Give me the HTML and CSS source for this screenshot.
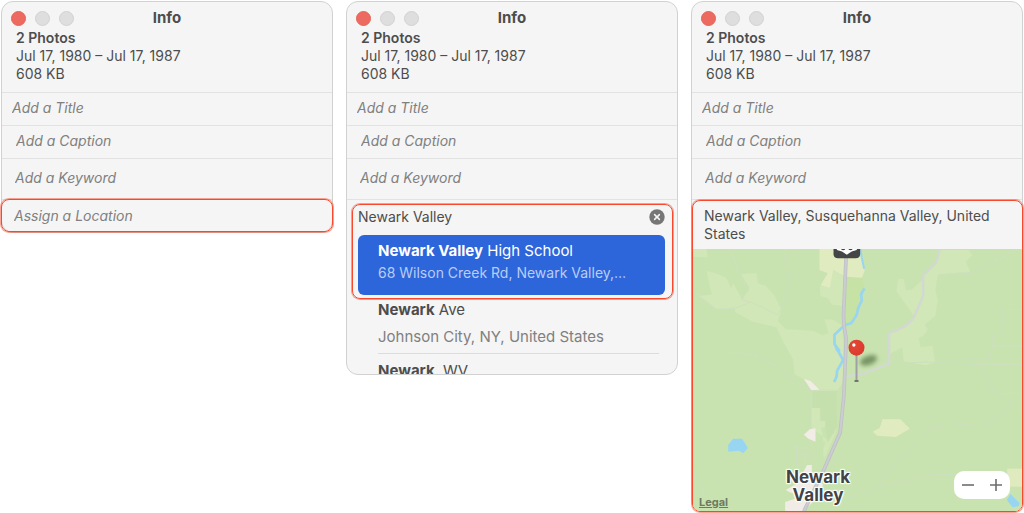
FILE: index.html
```
<!DOCTYPE html>
<html lang="en">
<head>
    <meta charset="UTF-8">
    <meta name="viewport" content="width=device-width, initial-scale=1.0">
    <title>Info</title>
    <link rel="stylesheet" href="styles.css">
</head>
<body>
    <main class="steps">
        <section class="panel">
            <header class="titlebar">
                <div class="lights">
                    <button class="light close" aria-label="Close"></button>
                    <button class="light" aria-label="Minimize" disabled></button>
                    <button class="light" aria-label="Zoom" disabled></button>
                </div>
                <h2>Info</h2>
            </header>
            <div class="meta">
                <strong>2 Photos</strong>
                <span>Jul 17, 1980 – Jul 17, 1987</span>
                <span>608 KB</span>
            </div>
            <input class="field title" type="text" placeholder="Add a Title" aria-label="Title">
            <input class="field caption" type="text" placeholder="Add a Caption" aria-label="Caption">
            <input class="field keyword" type="text" placeholder="Add a Keyword" aria-label="Keyword">
            <div class="highlight assign">
                <input class="field location" type="text" placeholder="Assign a Location" aria-label="Location">
            </div>
        </section>

        <section class="panel">
            <header class="titlebar">
                <div class="lights">
                    <button class="light close" aria-label="Close"></button>
                    <button class="light" aria-label="Minimize" disabled></button>
                    <button class="light" aria-label="Zoom" disabled></button>
                </div>
                <h2>Info</h2>
            </header>
            <div class="meta">
                <strong>2 Photos</strong>
                <span>Jul 17, 1980 – Jul 17, 1987</span>
                <span>608 KB</span>
            </div>
            <input class="field title" type="text" placeholder="Add a Title" aria-label="Title">
            <input class="field caption" type="text" placeholder="Add a Caption" aria-label="Caption">
            <input class="field keyword" type="text" placeholder="Add a Keyword" aria-label="Keyword">
            <div class="highlight search">
                <div class="search-row">
                    <input class="search-input" type="text" value="Newark Valley" aria-label="Location">
                    <button class="clear" aria-label="Clear">
                        <svg viewBox="0 0 16 16" width="16" height="16">
                            <circle cx="8" cy="8" r="7.7" fill="#767676"/>
                            <path d="M5.6 5.6l4.8 4.8M10.4 5.6l-4.8 4.8" stroke="#f5f5f5" stroke-width="1.5" stroke-linecap="round"/>
                        </svg>
                    </button>
                </div>
                <button class="result selected">
                    <span class="name"><b>Newark Valley</b> High School</span>
                    <span class="address">68 Wilson Creek Rd, Newark Valley,…</span>
                </button>
            </div>
            <div class="results">
                <button class="result">
                    <span class="name"><b>Newark</b> Ave</span>
                    <span class="address">Johnson City, NY, United States</span>
                </button>
                <button class="result">
                    <span class="name"><b>Newark</b>&nbsp; WV</span>
                </button>
            </div>
        </section>

        <section class="panel">
            <header class="titlebar">
                <div class="lights">
                    <button class="light close" aria-label="Close"></button>
                    <button class="light" aria-label="Minimize" disabled></button>
                    <button class="light" aria-label="Zoom" disabled></button>
                </div>
                <h2>Info</h2>
            </header>
            <div class="meta">
                <strong>2 Photos</strong>
                <span>Jul 17, 1980 – Jul 17, 1987</span>
                <span>608 KB</span>
            </div>
            <input class="field title" type="text" placeholder="Add a Title" aria-label="Title">
            <input class="field caption" type="text" placeholder="Add a Caption" aria-label="Caption">
            <input class="field keyword" type="text" placeholder="Add a Keyword" aria-label="Keyword">
            <div class="highlight place">
                <textarea class="place-name" rows="2" aria-label="Location">Newark Valley, Susquehanna Valley, United States</textarea>
                <div class="map">
                    <svg class="map-art" viewBox="6 9 990 786" preserveAspectRatio="xMidYMid slice">
                        <defs>
                            <radialGradient id="ball" cx="0.4" cy="0.35" r="0.7">
                                <stop offset="0" stop-color="#e54636"/>
                                <stop offset="1" stop-color="#da3a2b"/>
                            </radialGradient>
                            <filter id="soft" x="-50%" y="-50%" width="200%" height="200%">
                                <feGaussianBlur stdDeviation="7"/>
                            </filter>
                        </defs>
                        <rect x="6" y="9" width="990" height="786" fill="#c9e3b0"/>
                        <!-- fields -->
                        <g fill="#d1e7b7">
                            <path d="M6 9H48L51 34L6 32z"/>
                            <path d="M48 74L80 84L108 96L122 128L128 112L154 160L176 132L174 120L152 84L198 82L202 112L226 120L250 146L272 190L262 226L286 250L368 254L396 268L414 262L402 220L430 222L456 240L462 400L440 436L436 560L400 640L398 610L408 580L362 545L362 486H388V524H404V544H392L400 590L432 560L438 440L362 432L340 400L312 384L308 340L280 290L258 244L184 226L134 198V188L78 188L24 150L64 146z"/>
                            <path d="M388 120L416 124L422 76H460V180L424 176L412 156L390 150z"/>
                            <path d="M746 12H834L846 26L826 48L840 78L742 87L734 130L742 164L734 210L702 236L712 250L698 270L684 276L690 304L726 300L734 350L706 358L640 346L636 304L597 324V262L650 238L672 212L618 136L624 98L640 100L646 132H662L698 100V90L738 50z"/>
                        </g>
                        <path d="M366 436L440 434V540L412 590L404 545V524H390V486H366z" fill="#c6e0ad"/>
                        <path d="M466 92L516 96L521 128L496 216L462 236L457 210z" fill="#c6e2a4"/>
                        <path d="M387 9H510L521 60L522 76L514 95L468 92L428 72L418 125L390 118L412 82L387 72z" fill="#e1ebc0"/>
                        <path d="M576 520H630L658 548L616 573L560 569L547 557L568 545z" fill="#e1ebc0"/>
                        <path d="M950 668H996V722H950z" fill="#e0eabf"/>
                        <!-- minor roads -->
                        <g fill="none" stroke="#cddfc0" stroke-width="3">
                            <path d="M116 9L172 132L154 162L182 168L260 206L274 186L296 100L284 9M6 134L78 190L136 186L182 168"/>
                            <path d="M114 322L182 324L262 362L312 408L362 432V660M362 432H440M318 590V660M318 606H344M318 626H362M344 626V660M318 658H362"/>
                            <path d="M744 86L848 78L908 50L978 11M996 190H936L934 258L908 266L904 300L898 336L862 342L816 334L786 352L862 356H996M597 354L706 348L786 352M904 300H996M862 342L896 416L922 444L996 442"/>
                            <path d="M964 446L956 486L896 530L726 542L656 616L628 632L604 672L578 694L564 726L526 746L470 752M564 724L650 708L716 686H800M456 618L416 662M6 676L36 734L46 752"/>
                        </g>
                        <!-- built up area -->
                        <g fill="#f1ede6">
                            <path d="M340 398L360 405L387 431L362 432z"/>
                            <path d="M340 566L358 550L375 547V587L354 578z"/>
                            <path d="M350 657H364V690L398 716L384 750L340 796H284V768L314 758L324 740L300 740L286 732L320 712z"/>
                        </g>
                        <!-- water -->
                        <g fill="none" stroke="#98d5f1" stroke-linejoin="round">
                            <path d="M510 9L514 36L521 68" stroke-width="6"/>
                            <path d="M522 127L512 144L514 164L504 184L498 208L482 232L462 238L432 266V294L442 314L458 342L440 374L438 392L431 408" stroke-width="8"/>
                        </g>
                        <path d="M432 288L450 312L448 322L436 314z" fill="#98d5f1"/>
                        <path d="M113 617V597L128 578H154L164 592L172 606L158 622L146 614z" fill="#98d5f1"/>
                        <path d="M960 744L949 762L966 784L985 780L987 771z" fill="#98d5f1"/>
                        <!-- roads -->
                        <g fill="none" stroke-linejoin="round">
                            <path d="M748 9L738 49L698 88V150L668 218L643 242L596 262V353L520 382L460 392" stroke="#d3d8d2" stroke-width="7"/>
                            <path d="M467 29L459 209L461 240L467 280L460 450L449 560L396 680L340 796" stroke="#bec1c3" stroke-width="11"/>
                            <path d="M467 29L459 209L461 240L467 280L460 450L449 560L396 680L340 796" stroke="#cccdd3" stroke-width="6"/>
                        </g>
                        <!-- route shield -->
                        <path d="M429-20H509V23Q509 37 495 37H443Q429 37 429 23z" fill="#444546"/>
                        <path d="M439-10H499V12Q483 14 469 26Q455 14 439 12z" fill="#fff"/>
                        <path d="M453 9q5 4 10 0M475 9q5 4 10 0" fill="none" stroke="#444546" stroke-width="4"/>
                        <!-- pin -->
                        <ellipse cx="534" cy="343" rx="27" ry="14" transform="rotate(-20 534 343)" fill="#5e7a4c" opacity="0.75" filter="url(#soft)"/>
                        <path d="M498 324V404" stroke="#a0a0a4" stroke-width="6"/>
                        <path d="M492 405H504" stroke="#5f6360" stroke-width="5"/>
                        <circle cx="498" cy="305" r="24" fill="url(#ball)"/>
                        <circle cx="490" cy="297" r="5" fill="#fff"/>
                    </svg>
                    <span class="town">Newark<br>Valley</span>
                    <a class="legal" href="#">Legal</a>
                    <div class="zoom">
                        <button aria-label="Zoom out"><svg viewBox="0 0 14 14" width="14" height="14"><path d="M1 7h12" stroke="#6e6e6e" stroke-width="1.6"/></svg></button>
                        <button aria-label="Zoom in"><svg viewBox="0 0 14 14" width="14" height="14"><path d="M1 7h12M7 1v12" stroke="#6e6e6e" stroke-width="1.6"/></svg></button>
                    </div>
                </div>
            </div>
        </section>
    </main>
</body>
</html>
```
FILE: styles.css
```
* {
    box-sizing: border-box;
}

body {
    margin: 0;
    background: #fff;
    font-family: Inter, "Liberation Sans", sans-serif;
    font-size: 14px;
    line-height: 18px;
    color: #4d4d4d;
}

button, input, textarea {
    font: inherit;
    color: inherit;
    margin: 0;
    padding: 0;
    border: none;
    border-radius: 0;
    background: none;
    outline: none;
}

.steps {
    display: grid;
    grid-template-columns: repeat(3, minmax(0, 1fr));
    align-items: start;
    gap: 13px;
    padding: 1px;
}

.panel {
    display: flex;
    flex-direction: column;
    background: #f5f5f5;
    border: 1px solid #d0d2d1;
    border-radius: 12px;
}

/* window header */
.titlebar {
    display: grid;
    grid-template-columns: 1fr auto 1fr;
    align-items: center;
    height: 27px;
    padding: 5px 9px 0;
}

.titlebar h2 {
    margin: 0;
    font-size: 15px;
    font-weight: 700;
}

.lights {
    display: flex;
    gap: 9px;
}

.light {
    width: 15px;
    height: 15px;
    border: 1px solid #d2d2d2;
    border-radius: 50%;
    background: #dedede;
}

.light.close {
    border-color: #e5645a;
    background: #ec6a5f;
}

.meta {
    display: flex;
    flex-direction: column;
    padding: 0 14px 9px;
    border-bottom: 1px solid #e2e2e2;
}

.meta strong {
    font-weight: 600;
}

/* editable rows */
.field {
    width: 100%;
    height: 33px;
    padding: 0 13px 3px;
    border-bottom: 1px solid #e2e2e2;
}

.field::placeholder {
    color: #808080;
    font-style: italic;
    opacity: 1;
}

.field.title {
    padding-left: 10px;
}

.field.caption {
    padding-left: 14px;
}

.field.keyword {
    height: 41px;
}

.field.location {
    height: 31px;
    padding: 0 12px;
    border-bottom: none;
}

.highlight {
    border: 1px solid #f9482b;
    border-radius: 8px;
    box-shadow: 0 0 0 1px rgba(249, 72, 43, 0.5);
}

.assign {
    margin: -1px -1px 0;
}

/* location search */
.search {
    margin: 4px 4px 0 5px;
    padding: 0 7px 3px 5px;
}

.search-row {
    display: flex;
    align-items: center;
    height: 30px;
    padding-bottom: 6px;
}

.search-input {
    flex: 1;
    min-width: 0;
}

.clear {
    display: flex;
}

.result {
    display: flex;
    flex-direction: column;
    gap: 9px;
    width: 100%;
    text-align: left;
    font-size: 15px;
}

.result b {
    font-weight: 700;
}

.address {
    color: #808080;
    white-space: nowrap;
}

.result.selected {
    gap: 4px;
    padding: 7px 20px 13px;
    border-radius: 6px;
    background: #2d65da;
    color: #fff;
}

.result.selected .address {
    font-size: 14px;
    color: #b9cdf5;
}

.results {
    display: flex;
    flex-direction: column;
    gap: 6px;
    max-height: 75px;
    margin: 0 18px 0 31px;
    overflow: hidden;
}

.results .result {
    flex-shrink: 0;
    padding: 2px 0 7px;
    border-bottom: 1px solid #dcdcdc;
}

/* chosen place with map */
.place {
    margin: 0 -1px -1px 0;
    overflow: hidden;
}

.place-name {
    display: block;
    width: 100%;
    height: 48px;
    padding: 6px 11px;
    resize: none;
    overflow: hidden;
}

.map {
    position: relative;
    height: 262px;
}

.map-art {
    display: block;
    width: 100%;
    height: 100%;
}

.town {
    position: absolute;
    left: 38%;
    bottom: 7px;
    transform: translateX(-50%);
    font-size: 17px;
    font-weight: 700;
    text-align: center;
    color: #414345;
    text-shadow: 0 0 2px #fff, 1px 1px 1px #fff, -1px -1px 1px #fff, 1px -1px 1px #fff, -1px 1px 1px #fff;
}

.legal {
    position: absolute;
    left: 6px;
    bottom: 0;
    font-size: 11px;
    font-weight: 700;
    color: #6c7a61;
}

.zoom {
    position: absolute;
    right: 12px;
    bottom: 12px;
    display: flex;
    width: 56px;
    height: 28px;
    border-radius: 10px;
    background: #fff;
}

.zoom button {
    flex: 1;
    display: flex;
    align-items: center;
    justify-content: center;
}
```
